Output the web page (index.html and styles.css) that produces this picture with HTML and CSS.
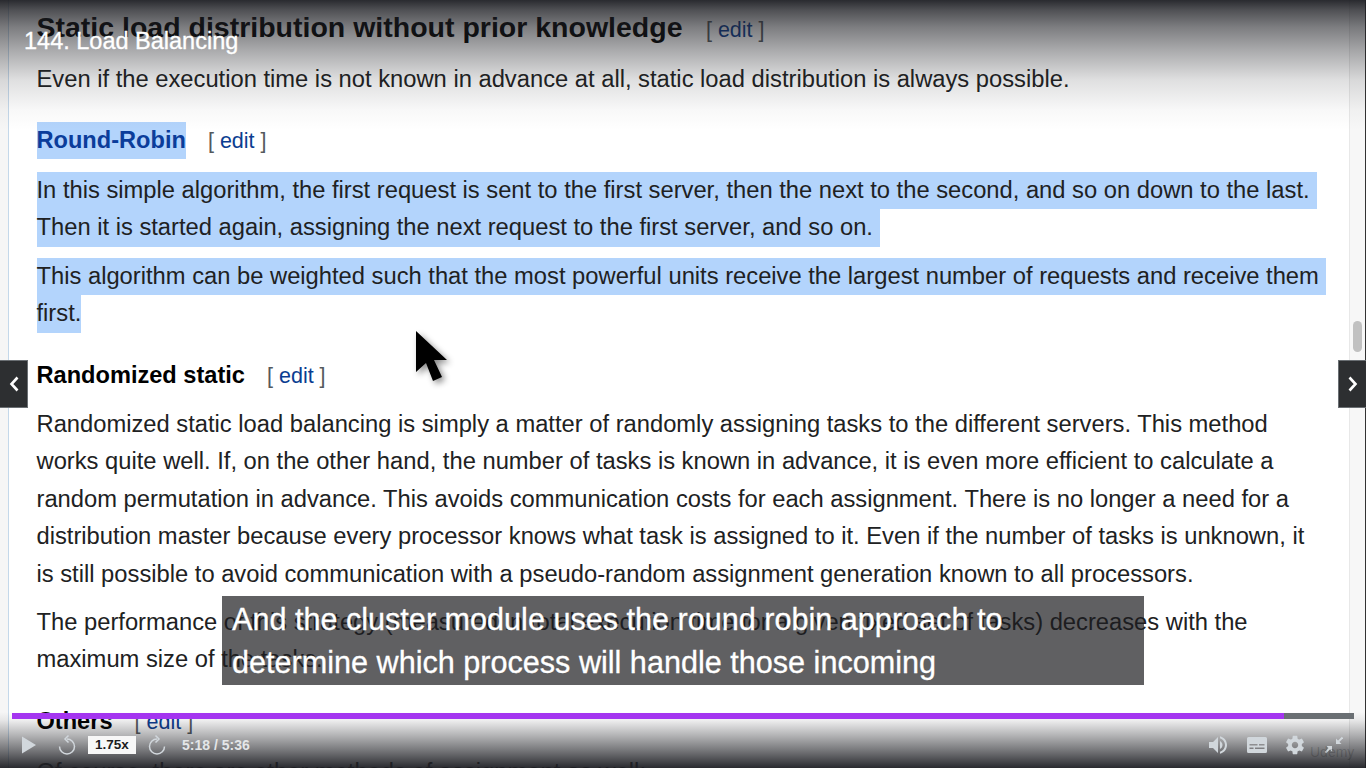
FILE: index.html
```html
<!DOCTYPE html>
<html lang="en">
<head>
	<meta charset="UTF-8" />
	<title>144. Load Balancing</title>
	<link rel="stylesheet" href="styles.css">
</head>
<body>
	<div id="player">
		<div id="article">
			<h2>Static load distribution without prior knowledge <span class="edit">[ <a>edit</a> ]</span></h2>
			<p>Even if the execution time is not known in advance at all, static load distribution is always possible.</p>

			<h3><a class="sel">Round-Robin</a> <span class="edit">[ <a>edit</a> ]</span></h3>
			<p>
				<span class="sel">In this simple algorithm, the first request is sent to the first server, then the next to the second, and so on down to the last.</span><br>
				<span class="sel">Then it is started again, assigning the next request to the first server, and so on.</span>
			</p>
			<p>
				<span class="sel">This algorithm can be weighted such that the most powerful units receive the largest number of requests and receive them</span><br>
				<span class="sel selEnd">first.</span>
			</p>

			<h3>Randomized static <span class="edit">[ <a>edit</a> ]</span></h3>
			<p>
				Randomized static load balancing is simply a matter of randomly assigning tasks to the different servers. This method<br>
				works quite well. If, on the other hand, the number of tasks is known in advance, it is even more efficient to calculate a<br>
				random permutation in advance. This avoids communication costs for each assignment. There is no longer a need for a<br>
				distribution master because every processor knows what task is assigned to it. Even if the number of tasks is unknown, it<br>
				is still possible to avoid communication with a pseudo-random assignment generation known to all processors.
			</p>
			<p>
				The performance of this strategy (measured in total execution time for a given fixed set of tasks) decreases with the<br>
				maximum size of the tasks.
			</p>

			<h3>Others <span class="edit">[ <a>edit</a> ]</span></h3>
			<p class="lastPara">Of course, there are other methods of assignment as well:</p>
		</div>

		<div id="scrollbar"><div id="thumb"></div></div>

		<div id="shadeTop"></div>
		<div id="shadeBottom"></div>
		<div id="title">144. Load Balancing</div>

		<!-- mouse pointer baked in the video -->
		<svg id="pointer" width="36" height="58" viewBox="0 0 36 58">
			<path d="M2 2v41l10-9 7 18 9-4-8-17h13z" fill="#000"/>
		</svg>

		<div class="nav navLeft">
			<svg width="12" height="18" viewBox="0 0 12 18"><path d="M9.500 2.500L3.500 9l6 6.500" fill="none" stroke="#fff" stroke-width="2.600"/></svg>
		</div>
		<div class="nav navRight">
			<svg width="12" height="18" viewBox="0 0 12 18"><path d="M2.500 2.500l6 6.500-6 6.500" fill="none" stroke="#fff" stroke-width="2.600"/></svg>
		</div>

		<div id="caption">And the cluster module uses the round robin approach to<br>determine which process will handle those incoming</div>

		<div id="progress"><div id="progressDone"></div></div>

		<div id="controls">
			<div class="group">
				<svg class="play" width="16" height="20" viewBox="0 0 16 20"><path d="M1 1.500v17L15 10z"/></svg>
				<svg class="seek" width="20" height="22" viewBox="0 0 20 22"><path d="M10 5a7.500 7.500 0 1 1-7.500 7.500" fill="none" stroke-width="1.500"/><path d="M11.500 1.500L8 5l3.500 3.500" fill="none" stroke-width="1.500"/></svg>
				<div id="speed">1.75x</div>
				<svg class="seek" width="20" height="22" viewBox="0 0 20 22"><path d="M10 5a7.500 7.500 0 1 0 7.500 7.500" fill="none" stroke-width="1.500"/><path d="M8.500 1.500L12 5 8.500 8.500" fill="none" stroke-width="1.500"/></svg>
				<div id="time">5:18 / 5:36</div>
			</div>
			<div class="group groupRight">
				<svg width="24" height="24" viewBox="0 0 24 24"><path d="M3 9v6h4l5 5V4L7 9H3z"/><path d="M16.500 12c0-1.770-1.020-3.290-2.500-4.030v8.050c1.480-.73 2.500-2.250 2.500-4.020z"/><path d="M14 3.230v2.060c2.890.86 5 3.540 5 6.710s-2.110 5.850-5 6.710v2.060c4.010-.91 7-4.490 7-8.770s-2.990-7.860-7-8.770z"/></svg>
				<svg width="20" height="16" viewBox="0 0 20 16"><path fill-rule="evenodd" d="M1.500 0h17A1.500 1.500 0 0 1 20 1.500v13a1.500 1.500 0 0 1-1.500 1.500h-17A1.500 1.500 0 0 1 0 14.500v-13A1.500 1.500 0 0 1 1.500 0zM2.500 7v1.500h8V7zM12 7v1.500h5.500V7zM2.500 10.500V12h4v-1.500zM8 10.500V12h9.500v-1.500z"/></svg>
				<svg width="22" height="22" viewBox="0 0 24 24"><path d="M19.430 12.980c.04-.32.07-.64.07-.98s-.03-.66-.07-.98l2.110-1.650c.19-.15.24-.42.12-.64l-2-3.460c-.12-.22-.39-.3-.61-.22l-2.490 1c-.52-.4-1.080-.73-1.690-.98l-.38-2.650C14.460 2.180 14.250 2 14 2h-4c-.25 0-.46.18-.49.42l-.38 2.650c-.61.25-1.170.59-1.690.98l-2.490-1c-.23-.09-.49 0-.61.22l-2 3.460c-.13.22-.07.49.12.64l2.110 1.650c-.04.32-.07.65-.07.98s.03.66.07.98l-2.110 1.650c-.19.15-.24.42-.12.64l2 3.460c.12.22.39.3.61.22l2.490-1c.52.4 1.080.73 1.690.98l.38 2.650c.03.24.24.42.49.42h4c.25 0 .46-.18.49-.42l.38-2.650c.61-.25 1.170-.59 1.690-.98l2.490 1c.23.09.49 0 .61-.22l2-3.460c.12-.22.07-.49-.12-.64l-2.110-1.650zM12 15.500c-1.930 0-3.500-1.570-3.500-3.500s1.570-3.500 3.500-3.500 3.500 1.570 3.500 3.500-1.570 3.500-3.500 3.500z"/></svg>
				<svg class="expand" width="18" height="18" viewBox="0 0 18 18"><path d="M17.500 1.500L12 7" fill="none" stroke-width="1.800"/><path d="M11 2.500V8h5.500z"/><path d="M.5 16.500L6 11" fill="none" stroke-width="1.800"/><path d="M7 15.500V10H1.500z"/></svg>
			</div>
		</div>
		<div id="watermark">Udemy</div>
	</div>
</body>
</html>
```

FILE: styles.css
```css
* {
	padding: 0;
	margin: 0;
	box-sizing: border-box;
}

body {
	background: #fff;
	font-family: 'Liberation Sans', Arial, sans-serif;
	overflow: hidden;
}

#player {
	position: relative;
	width: 1366px;
	height: 768px;
	overflow: hidden;
	background: #f6f6f6;
}

#article {
	height: 768px;
	margin: 0 17px 0 8px;
	padding: 8px 0 0 27.500px;
	background: #fff;
	border-left: 1px solid #c4d8ea;
	color: #202122;
	font-size: 23.740px;
	line-height: 37.4px;
	white-space: nowrap;
}

h2 {
	font-size: 28.500px;
	line-height: 38px;
	color: #000;
	margin-bottom: 12px;
}

h3 {
	font-size: 23.600px;
	line-height: 37px;
	color: #000;
	margin: 24px 0 11.500px;
}

h3 a {
	color: #0b3d9b;
}

p {
	margin-bottom: 11px;
}

.lastPara {
	padding-top: 2px;
}

.edit {
	margin-left: 15.500px;
	font-size: 21.500px;
	font-weight: normal;
	color: #54595d;
}

.edit a {
	color: #0b3d91;
}

.sel {
	display: inline-block;
	background: #b3d4fc;
	padding-right: 7px;
}

h3 .sel,
.selEnd {
	padding-right: 0;
}

#scrollbar {
	position: absolute;
	top: 0;
	right: 0;
	bottom: 0;
	width: 17px;
	border-left: 1px solid #e8e8e8;
	border-right: 1px solid #333;
	background: #f7f7f7;
}

#thumb {
	margin: 321px 0 0 3px;
	width: 9px;
	height: 31px;
	border-radius: 5px;
	background: #c1c1c1;
}

#shadeTop {
	position: absolute;
	top: 0;
	left: 0;
	right: 0;
	height: 130px;
	background: linear-gradient(rgba(30, 31, 36, 0.95), rgba(30, 31, 36, 0.78) 10px, rgba(30, 31, 36, 0.58) 27px, rgba(30, 31, 36, 0.38) 50px, rgba(30, 31, 36, 0.14) 80px, rgba(30, 31, 36, 0.03) 110px, rgba(30, 31, 36, 0));
}

#shadeBottom {
	position: absolute;
	left: 0;
	right: 0;
	bottom: 0;
	height: 56px;
	background: linear-gradient(rgba(30, 31, 36, 0), rgba(30, 31, 36, 0.07) 8px, rgba(30, 31, 36, 0.33) 23px, rgba(30, 31, 36, 0.6) 38px, rgba(30, 31, 36, 0.95));
}

#title {
	position: absolute;
	top: 27px;
	left: 24px;
	color: #fff;
	font-size: 23.500px;
	line-height: 28px;
	-webkit-text-stroke: 0.3px #fff;
}

#pointer {
	position: absolute;
	top: 329px;
	left: 414px;
	filter: drop-shadow(3px 3px 3px rgba(0, 0, 0, 0.45));
}

.nav {
	position: absolute;
	top: 360px;
	width: 28px;
	height: 48px;
	display: flex;
	align-items: center;
	justify-content: center;
	background: #2d2f31;
}

.navLeft {
	left: 0;
	border: 1px solid #6a6f73;
	border-left: none;
}

.navRight {
	right: 0;
	border: 1px solid #6a6f73;
	border-right: none;
}

#caption {
	position: absolute;
	top: 596px;
	left: 222px;
	width: 922px;
	height: 89px;
	padding: 2px 10px;
	background: rgba(28, 29, 31, 0.7);
	color: #fff;
	font-size: 30.600px;
	line-height: 43px;
	white-space: nowrap;
	-webkit-text-stroke: 0.3px #fff;
}

#progress {
	position: absolute;
	top: 713px;
	left: 12px;
	width: 1342px;
	height: 6px;
	background: #6a6f73;
}

#progressDone {
	width: 1272px;
	height: 6px;
	background: #a435f0;
}

#controls {
	position: absolute;
	left: 21px;
	right: 23px;
	top: 734px;
	height: 22px;
	display: flex;
	align-items: center;
	justify-content: space-between;
}

.group {
	display: flex;
	align-items: center;
}

.group svg {
	fill: #d1d7dc;
	stroke: #d1d7dc;
	stroke-width: 0;
}

.play {
	margin-right: 20px;
}

.group .seek {
	stroke-width: 1.500px;
}

#speed {
	width: 48px;
	height: 18px;
	margin: 0 11px;
	background: #f7f7f7;
	color: #1c1d1f;
	font-size: 13.500px;
	font-weight: bold;
	line-height: 18px;
	text-align: center;
}

#time {
	margin-left: 15px;
	color: #e4e6e8;
	font-size: 14px;
	font-weight: bold;
}

.groupRight {
	gap: 17px;
}

.expand {
	margin-left: 2px;
}

#watermark {
	position: absolute;
	top: 744px;
	left: 1310px;
	color: rgba(0, 0, 0, 0.18);
	font-size: 14px;
}
```
